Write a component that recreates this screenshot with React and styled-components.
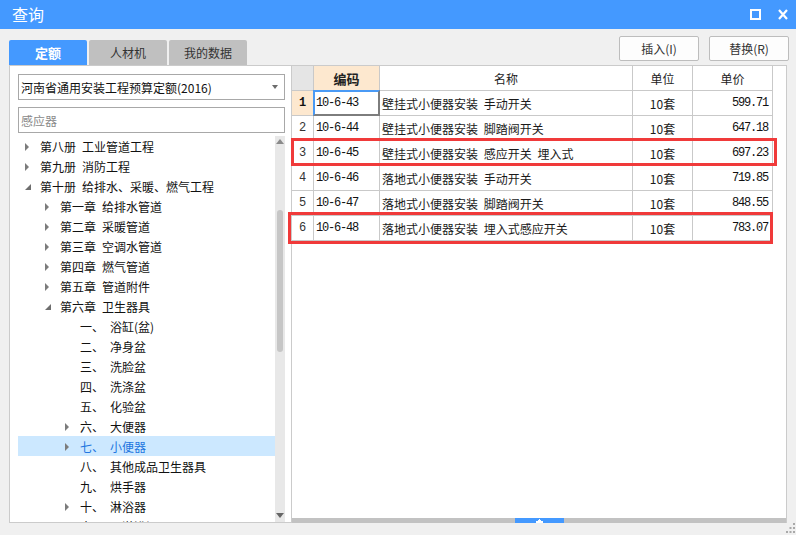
import React from 'react'
import styled, { createGlobalStyle, css } from 'styled-components'

const GlobalStyle = createGlobalStyle`
  html, body {
    margin: 0;
    padding: 0;
    background: #f0f0f0;
  }
  * {
    box-sizing: border-box;
  }
`;

const CJK = `"Noto Sans CJK SC", "Noto Sans", sans-serif`;
const MONO = `"Liberation Mono", "DejaVu Sans Mono", monospace`;

const tree = [
  { level: 1, arrow: 'closed', head: '第八册', label: '工业管道工程' },
  { level: 1, arrow: 'closed', head: '第九册', label: '消防工程' },
  { level: 1, arrow: 'open', head: '第十册', label: '给排水、采暖、燃气工程' },
  { level: 2, arrow: 'closed', head: '第一章', label: '给排水管道' },
  { level: 2, arrow: 'closed', head: '第二章', label: '采暖管道' },
  { level: 2, arrow: 'closed', head: '第三章', label: '空调水管道' },
  { level: 2, arrow: 'closed', head: '第四章', label: '燃气管道' },
  { level: 2, arrow: 'closed', head: '第五章', label: '管道附件' },
  { level: 2, arrow: 'open', head: '第六章', label: '卫生器具' },
  { level: 3, head: '一、', label: '浴缸(盆)' },
  { level: 3, head: '二、', label: '净身盆' },
  { level: 3, head: '三、', label: '洗脸盆' },
  { level: 3, head: '四、', label: '洗涤盆' },
  { level: 3, head: '五、', label: '化验盆' },
  { level: 3, arrow: 'closed', head: '六、', label: '大便器' },
  { level: 3, arrow: 'closed', head: '七、', label: '小便器', selected: true },
  { level: 3, head: '八、', label: '其他成品卫生器具' },
  { level: 3, head: '九、', label: '烘手器' },
  { level: 3, arrow: 'closed', head: '十、', label: '淋浴器' },
  { level: 3, head: '十一、', label: '淋浴间' },
];

const rows = [
  { code: '10-6-43', name: '壁挂式小便器安装 手动开关', unit: '10套', price: '599.71' },
  { code: '10-6-44', name: '壁挂式小便器安装 脚踏阀开关', unit: '10套', price: '647.18' },
  { code: '10-6-45', name: '壁挂式小便器安装 感应开关 埋入式', unit: '10套', price: '697.23' },
  { code: '10-6-46', name: '落地式小便器安装 手动开关', unit: '10套', price: '719.85' },
  { code: '10-6-47', name: '落地式小便器安装 脚踏阀开关', unit: '10套', price: '848.55' },
  { code: '10-6-48', name: '落地式小便器安装 埋入式感应开关', unit: '10套', price: '783.07' },
];

const App = () => {
  return (
    <>
      <GlobalStyle />
      <Window>
        <TitleBar>
          <Title>查询</Title>
          <TitleIcons>
            <svg width="11" height="11" viewBox="0 0 11 11">
              <rect x="1" y="1" width="9" height="9" fill="none" stroke="#fff" strokeWidth="2" />
            </svg>
            <svg width="10" height="11" viewBox="0 0 10 11">
              <path d="M1 1 L9 10 M9 1 L1 10" stroke="#fff" strokeWidth="2.2" />
            </svg>
          </TitleIcons>
        </TitleBar>

        <Toolbar>
          <Tabs>
            <Tab $active>定额</Tab>
            <Tab>人材机</Tab>
            <Tab>我的数据</Tab>
          </Tabs>
          <Actions>
            <ActionButton>插入(I)</ActionButton>
            <ActionButton>替换(R)</ActionButton>
          </Actions>
        </Toolbar>

        <Main>
          <LeftPanel>
            <Select>
              <span>河南省通用安装工程预算定额(2016)</span>
              <SelectArrow />
            </Select>
            <Search>感应器</Search>
            <TreeWrap>
              <TreeList>
                {tree.map((item, i) => (
                  <TreeRow key={i} $level={item.level} $selected={item.selected}>
                    {item.arrow && <Arrow $level={item.level} $open={item.arrow === 'open'} />}
                    <span>{item.head}</span>
                    <TreeLabel>{item.label}</TreeLabel>
                  </TreeRow>
                ))}
              </TreeList>
              <VScroll>
                <ScrollArrow $up />
                <VThumb />
                <ScrollArrow />
              </VScroll>
            </TreeWrap>
          </LeftPanel>

          <RightPanel>
            <GridArea>
              <Grid>
                <HeadCell $corner />
                <HeadCell $key>编码</HeadCell>
                <HeadCell>名称</HeadCell>
                <HeadCell>单位</HeadCell>
                <HeadCell>单价</HeadCell>
                {rows.map((r, i) => (
                  <React.Fragment key={r.code}>
                    <NumCell $current={i === 0}>{i + 1}</NumCell>
                    <CodeCell $focused={i === 0}>{r.code}</CodeCell>
                    <Cell>{r.name}</Cell>
                    <Cell $align="center">{r.unit}</Cell>
                    <PriceCell>{r.price}</PriceCell>
                  </React.Fragment>
                ))}
              </Grid>
              <Mark $x={-1} $y={72} $w={486} $h={28} />
              <Mark $x={-4} $y={146} $w={485} $h={32} />
            </GridArea>
            <HScroll>
              <HThumb>
                <svg width="7" height="4" viewBox="0 0 7 4">
                  <path d="M3 0 H4 V1 H5 V2 H7 V4 H0 V2 H2 V1 H3 Z" fill="#fff" />
                </svg>
              </HThumb>
            </HScroll>
          </RightPanel>

          <Grip>
            <svg width="9" height="11" viewBox="0 0 9 11">
              <rect x="7" y="0" width="2" height="2" fill="#a9a9a9" />
              <rect x="3.5" y="4" width="2" height="2" fill="#a9a9a9" />
              <rect x="7" y="4" width="2" height="2" fill="#a9a9a9" />
              <rect x="0" y="8" width="2" height="2" fill="#a9a9a9" />
              <rect x="3.5" y="8" width="2" height="2" fill="#a9a9a9" />
              <rect x="7" y="8" width="2" height="2" fill="#a9a9a9" />
            </svg>
          </Grip>
        </Main>
      </Window>
    </>
  );
}

const Window = styled.div`
  width: 796px;
  height: 535px;
  background: #f0f0f0;
  display: flex;
  flex-direction: column;
  font-family: ${CJK};
  font-size: 12px;
  color: #1a1a1a;
  overflow: hidden;
`;

const TitleBar = styled.div`
  height: 29px;
  background: #4499ff;
  display: flex;
  align-items: center;
  justify-content: space-between;
  padding: 0 8px 0 12px;
`;

const Title = styled.div`
  color: #fff;
  font-size: 16px;
  line-height: 1;
  margin-top: -1px;
`;

const TitleIcons = styled.div`
  display: flex;
  align-items: center;
  gap: 17px;
  margin-top: -1px;
  svg {
    display: block;
  }
`;

const Toolbar = styled.div`
  height: 36px;
  display: flex;
  justify-content: space-between;
  padding: 0 7px 0 9px;
`;

const Tabs = styled.div`
  display: flex;
  align-items: flex-end;
  gap: 2px;
`;

const Tab = styled.div`
  width: 78px;
  height: 25px;
  border-radius: 2px 2px 0 0;
  display: flex;
  align-items: center;
  justify-content: center;
  background: #c0c0c0;
  color: #333;
  font-size: 12px;
  ${({ $active }) => $active && css`
    background: #4499ff;
    color: #fff;
    font-weight: bold;
    font-size: 13px;
  `}
`;

const Actions = styled.div`
  display: flex;
  gap: 10px;
  padding-top: 7px;
`;

const ActionButton = styled.button`
  width: 80px;
  height: 25px;
  background: #fdfdfd;
  border: 1px solid #bdbdbd;
  border-radius: 2px;
  font-family: ${CJK};
  font-size: 12px;
  color: #333;
  padding: 0;
`;

const Main = styled.div`
  display: flex;
  padding-left: 9px;
  position: relative;
  flex: 1;
`;

const LeftPanel = styled.div`
  width: 283px;
  height: 458px;
  background: #fff;
  border: 1px solid #cbcbcb;
  padding: 8px 5px 0 8px;
  display: flex;
  flex-direction: column;
`;

const Select = styled.div`
  width: 267px;
  height: 26px;
  border: 1px solid #a8a8a8;
  display: flex;
  align-items: center;
  justify-content: space-between;
  padding: 0 6px 0 2px;
  color: #111;
`;

const SelectArrow = styled.span`
  width: 0;
  height: 0;
  border-left: 3.5px solid transparent;
  border-right: 3.5px solid transparent;
  border-top: 4px solid #6c6c6c;
`;

const Search = styled.div`
  width: 267px;
  height: 26px;
  margin-top: 7px;
  border: 1px solid #a8a8a8;
  display: flex;
  align-items: center;
  padding-left: 2px;
  color: #8a8a8a;
`;

const TreeWrap = styled.div`
  margin-top: 3px;
  height: 386px;
  display: flex;
  overflow: hidden;
`;

const TreeList = styled.div`
  width: 257px;
  display: flex;
  flex-direction: column;
`;

const TreeRow = styled.div`
  position: relative;
  flex: 0 0 20px;
  height: 20px;
  display: flex;
  align-items: center;
  padding-left: ${({ $level }) => 2 + $level * 20}px;
  white-space: nowrap;
  color: #111;
  ${({ $selected }) => $selected && css`
    background: #cce8ff;
    color: #2276e0;
  `}
`;

const TreeLabel = styled.span`
  margin-left: 6px;
`;

const Arrow = styled.span`
  position: absolute;
  top: 50%;
  left: ${({ $level }) => $level * 20 - 13}px;
  width: 0;
  height: 0;
  ${({ $open }) => $open
    ? css`
      margin-top: -2px;
      border-left: 6px solid transparent;
      border-bottom: 6px solid #6e6e6e;
    `
    : css`
      margin-top: -3px;
      border-top: 4px solid transparent;
      border-bottom: 4px solid transparent;
      border-left: 4px solid #7c7c7c;
    `}
`;

const VScroll = styled.div`
  width: 10px;
  height: 386px;
  background: #e8e8e8;
  position: relative;
  display: flex;
  flex-direction: column;
  align-items: center;
  justify-content: space-between;
  padding: 3px 0 4px;
`;

const ScrollArrow = styled.span`
  width: 0;
  height: 0;
  border-left: 4.5px solid transparent;
  border-right: 4.5px solid transparent;
  ${({ $up }) => $up
    ? css`border-bottom: 5px solid #8a8a8a;`
    : css`border-top: 5px solid #666;`}
`;

const VThumb = styled.span`
  position: absolute;
  left: 2px;
  top: 74px;
  width: 6px;
  height: 142px;
  border-radius: 3px;
  background: #c6c6c6;
`;

const RightPanel = styled.div`
  width: 495px;
  height: 458px;
  background: #fff;
  border-top: 1px solid #cbcbcb;
  border-right: 1px solid #cbcbcb;
  display: flex;
  flex-direction: column;
`;

const GridArea = styled.div`
  position: relative;
  flex: 1;
`;

const Grid = styled.div`
  display: grid;
  grid-template-columns: 22px 66px 253px 60px 80px;
  grid-auto-rows: 25px;
  width: 481px;
`;

const baseCell = css`
  border-right: 1px solid #c9c9c9;
  border-bottom: 1px solid #c9c9c9;
  display: flex;
  align-items: center;
  white-space: nowrap;
  overflow: visible;
`;

const HeadCell = styled.div`
  ${baseCell}
  justify-content: center;
  background: #fff;
  color: #222;
  ${({ $corner }) => $corner && css`background: #e5e5e5;`}
  ${({ $key }) => $key && css`
    background: #fde8cf;
    font-weight: bold;
    font-size: 13px;
  `}
`;

const Cell = styled.div`
  ${baseCell}
  padding: 0 2px;
  word-spacing: 3px;
  justify-content: ${({ $align }) => ($align === 'center' ? 'center' : 'flex-start')};
`;

const NumCell = styled.div`
  ${baseCell}
  justify-content: center;
  font-family: ${MONO};
  font-size: 12px;
  color: #333;
  ${({ $current }) => $current && css`
    background: #fde8cf;
    font-weight: bold;
    color: #111;
  `}
`;

const CodeCell = styled.div`
  ${baseCell}
  position: relative;
  padding-left: 2px;
  font-family: ${MONO};
  font-size: 12px;
  letter-spacing: -1.2px;
  color: #111;
  ${({ $focused }) => $focused && css`
    &::after {
      content: '';
      position: absolute;
      top: -1px;
      left: -1px;
      right: -1px;
      bottom: -1px;
      border-top: 2px solid #4a9af5;
      border-left: 2px solid #4a9af5;
      border-right: 2px solid #7d7d7d;
      border-bottom: 2px solid #7d7d7d;
    }
  `}
`;

const PriceCell = styled.div`
  ${baseCell}
  justify-content: flex-end;
  padding-right: 4px;
  font-family: ${MONO};
  font-size: 12px;
  letter-spacing: -1.2px;
  color: #111;
`;

const Mark = styled.div`
  position: absolute;
  left: ${({ $x }) => $x}px;
  top: ${({ $y }) => $y}px;
  width: ${({ $w }) => $w}px;
  height: ${({ $h }) => $h}px;
  border: 3px solid #f03a3a;
  pointer-events: none;
`;

const HScroll = styled.div`
  height: 5px;
  background: #c2c2c2;
  display: flex;
  padding-left: 223px;
`;

const HThumb = styled.div`
  width: 49px;
  height: 5px;
  background: #4499ff;
  display: flex;
  align-items: flex-end;
  justify-content: center;
  svg {
    display: block;
  }
`;

const Grip = styled.div`
  position: absolute;
  right: 1px;
  bottom: 1px;
  svg {
    display: block;
  }
`;

export default App;
